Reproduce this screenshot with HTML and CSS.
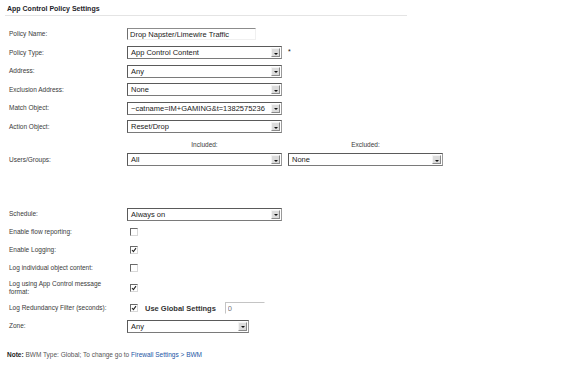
FILE: index.html
```html
<!DOCTYPE html>
<html>
<head>
  <meta charset="UTF-8">
  <title>App Control Policy Settings</title>
  <link rel="stylesheet" href="styles.css">
</head>
<body>
  <div class="section">
    <h2 class="section-title">App Control Policy Settings</h2>

    <div class="form">
      <div class="row">
        <span class="label">Policy Name:</span>
        <input class="text-input name-input" type="text" value="Drop Napster/Limewire Traffic">
      </div>
      <div class="row">
        <span class="label">Policy Type:</span>
        <div class="select"><span class="select-value">App Control Content</span><span class="select-arrow"></span></div>
        <span class="required">*</span>
      </div>
      <div class="row">
        <span class="label">Address:</span>
        <div class="select"><span class="select-value">Any</span><span class="select-arrow"></span></div>
      </div>
      <div class="row">
        <span class="label">Exclusion Address:</span>
        <div class="select"><span class="select-value">None</span><span class="select-arrow"></span></div>
      </div>
      <div class="row">
        <span class="label">Match Object:</span>
        <div class="select"><span class="select-value">~catname=IM+GAMING&amp;t=1382575236</span><span class="select-arrow"></span></div>
      </div>
      <div class="row">
        <span class="label">Action Object:</span>
        <div class="select"><span class="select-value">Reset/Drop</span><span class="select-arrow"></span></div>
      </div>

      <div class="row column-heads">
        <span class="label"></span>
        <span class="column-head">Included:</span>
        <span class="column-head">Excluded:</span>
      </div>
      <div class="row users-row">
        <span class="label">Users/Groups:</span>
        <div class="select"><span class="select-value">All</span><span class="select-arrow"></span></div>
        <div class="select excluded-select"><span class="select-value">None</span><span class="select-arrow"></span></div>
      </div>

      <div class="row small-row">
        <span class="label">Schedule:</span>
        <div class="select"><span class="select-value">Always on</span><span class="select-arrow"></span></div>
      </div>
      <div class="row small-row">
        <span class="label">Enable flow reporting:</span>
        <span class="checkbox"></span>
      </div>
      <div class="row small-row">
        <span class="label">Enable Logging:</span>
        <span class="checkbox checked"><svg viewBox="0 0 6 6" width="6" height="6"><path d="M1 3 L2.4 4.6 L5 1.2" fill="none" stroke="#222" stroke-width="1.1"/></svg></span>
      </div>
      <div class="row small-row">
        <span class="label">Log individual object content:</span>
        <span class="checkbox"></span>
      </div>
      <div class="row two-line-row">
        <span class="label">Log using App Control message format:</span>
        <span class="checkbox checked"><svg viewBox="0 0 6 6" width="6" height="6"><path d="M1 3 L2.4 4.6 L5 1.2" fill="none" stroke="#222" stroke-width="1.1"/></svg></span>
      </div>
      <div class="row small-row">
        <span class="label">Log Redundancy Filter (seconds):</span>
        <span class="checkbox checked"><svg viewBox="0 0 6 6" width="6" height="6"><path d="M1 3 L2.4 4.6 L5 1.2" fill="none" stroke="#222" stroke-width="1.1"/></svg></span>
        <span class="global-label">Use Global Settings</span>
        <input class="text-input seconds-input" type="text" value="0">
      </div>
      <div class="row small-row">
        <span class="label">Zone:</span>
        <div class="select zone-select"><span class="select-value">Any</span><span class="select-arrow"></span></div>
      </div>
    </div>

    <p class="note"><b>Note:</b> BWM Type: Global; To change go to <a href="#">Firewall Settings &gt; BWM</a></p>
  </div>
</body>
</html>
```

FILE: styles.css
```css
body {
  margin: 0;
  font-family: "Liberation Sans", Arial, sans-serif;
  color: #3a3a3a;
  background-color: #ffffff;
}
.section {
  padding-top: 4px;
}
.section-title {
  margin: 0 0 0 5px;
  width: 400px;
  padding: 0 0 1px 2px;
  font-size: 7px;
  line-height: 10px;
  font-weight: bold;
  color: #1e1e2a;
  border-bottom: 1px solid #e4e4e4;
}
.form {
  margin-top: 9px;
  padding-left: 9px;
}
.row {
  display: flex;
  align-items: center;
  height: 18.5px;
}
.small-row {
  height: 18px;
}
.two-line-row {
  height: 22px;
}
.label {
  width: 118px;
  flex-shrink: 0;
  padding-right: 6px;
  box-sizing: border-box;
  font-size: 6.5px;
  line-height: 8.5px;
}
.text-input {
  box-sizing: border-box;
  margin: 0;
  padding: 0 0 0 2px;
  height: 12px;
  font-family: "Liberation Sans", Arial, sans-serif;
  font-size: 7.5px;
  color: #222;
  background: #ffffff;
  border: 1px solid;
  border-color: #8c8c8c #f0f0f0 #f0f0f0 #6e6e6e;
  outline: none;
}
.name-input {
  width: 129px;
}
.seconds-input {
  width: 40px;
  margin-left: 9px;
  color: #777;
  border-color: #c4c4c4 #ffffff #ffffff #c4c4c4;
}
.select {
  display: flex;
  width: 155px;
  height: 13px;
  box-sizing: border-box;
  border: 1px solid;
  border-color: #5a5a5a #9a9a9a #7a7a7a #5a5a5a;
  background: #ffffff;
}
.select-value {
  flex: 1;
  overflow: hidden;
  white-space: nowrap;
  padding-left: 3px;
  font-size: 7.5px;
  line-height: 11px;
  color: #222;
}
.select-arrow {
  width: 9px;
  margin: 1px 1px 1px 0;
  box-sizing: border-box;
  background: #dcdcdc;
  border: 1px solid;
  border-color: #f4f4f4 #8a8a8a #8a8a8a #f4f4f4;
  display: flex;
  align-items: center;
  justify-content: center;
}
.select-arrow:after {
  content: "";
  margin-top: 2px;
  border-left: 2px solid transparent;
  border-right: 2px solid transparent;
  border-top: 2px solid #111;
}
.excluded-select {
  margin-left: 6px;
}
.zone-select {
  width: 122px;
}
.required {
  margin-left: 6px;
  margin-top: -3px;
  font-size: 7px;
  color: #111;
}
.column-heads {
  height: 16px;
}
.column-head {
  width: 155px;
  margin-right: 6px;
  text-align: center;
  font-size: 6.5px;
}
.users-row {
  height: 53px;
  align-items: flex-start;
  padding-top: 1px;
  box-sizing: border-box;
}
.users-row .label {
  line-height: 13px;
}
.checkbox {
  width: 8px;
  height: 8px;
  margin-left: 3px;
  box-sizing: border-box;
  border: 1px solid;
  border-color: #6a6a6a #d8d8d8 #d8d8d8 #6a6a6a;
  background: #ffffff;
  display: flex;
  align-items: center;
  justify-content: center;
}
.checkbox svg {
  display: block;
}
.global-label {
  margin-left: 7px;
  font-size: 7.5px;
  font-weight: bold;
  color: #333;
}
.note {
  margin: 15px 0 0 7px;
  font-size: 6.5px;
  line-height: 10px;
  color: #555;
}
.note b {
  color: #222;
}
.note a {
  color: #2254a4;
  text-decoration: none;
}
```
